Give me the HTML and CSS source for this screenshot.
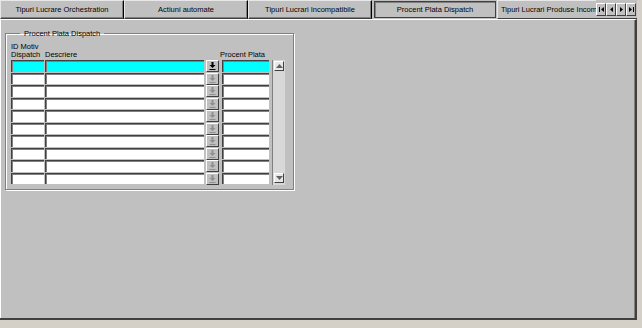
FILE: index.html
```html
<!DOCTYPE html>
<html lang="en">
<head>
    <meta charset="UTF-8">
    <title>Procent Plata Dispatch</title>
    <link rel="stylesheet" href="styles.css">
</head>
<body>
    <div class="window">
        <div class="tabs">
            <div class="tab">Tipuri Lucrare Orchestration</div>
            <div class="tab">Actiuni automate</div>
            <div class="tab">Tipuri Lucrari Incompatibile</div>
            <div class="tab tab-active">Procent Plata Dispatch</div>
            <div class="tab tab-cut">Tipuri Lucrari Produse Incompatibile</div>
            <div class="tab-nav">
                <span class="nav-btn"><svg width="7" height="7" viewBox="0 0 7 7"><rect x="1" y="1" width="1" height="5"/><path d="M6 1 L3 3.5 L6 6 Z"/></svg></span>
                <span class="nav-btn"><svg width="7" height="7" viewBox="0 0 7 7"><path d="M5 1 L2 3.5 L5 6 Z"/></svg></span>
                <span class="nav-btn"><svg width="7" height="7" viewBox="0 0 7 7"><path d="M2 1 L5 3.5 L2 6 Z"/></svg></span>
                <span class="nav-btn"><svg width="7" height="7" viewBox="0 0 7 7"><path d="M1 1 L4 3.5 L1 6 Z"/><rect x="5" y="1" width="1" height="5"/></svg></span>
            </div>
        </div>

        <div class="panel">
            <fieldset class="group">
                <legend>Procent Plata Dispatch</legend>
                <div class="grid" id="grid">
                    <div class="head head-id">ID Motiv<br>Dispatch</div>
                    <div class="head">Descriere</div>
                    <div class="head"></div>
                    <div class="head head-pct">Procent Plata</div>
                    <div class="head"></div>
                </div>
            </fieldset>
        </div>
    </div>

    <script>
        let grid = document.getElementById('grid');
        let rowCount = 10;

        for (let i = 0; i < rowCount; i++) {
            let current = i === 0 ? ' cell-current' : '';
            grid.insertAdjacentHTML('beforeend',
                '<div class="cell' + current + '"></div>' +
                '<div class="cell' + current + '"></div>' +
                '<div class="lov' + (i === 0 ? ' lov-active' : '') + '">' +
                    '<svg width="7" height="8" viewBox="0 0 7 8"><path d="M2.5 0 H4.5 V3 H6.5 L3.5 6 L0.5 3 H2.5 Z"/><rect x="0.5" y="7" width="6" height="1"/></svg>' +
                '</div>' +
                '<div class="cell' + current + '"></div>'
            );
            if (i === 0) {
                grid.insertAdjacentHTML('beforeend',
                    '<div class="scroll">' +
                        '<span class="scroll-btn"><svg width="7" height="4" viewBox="0 0 7 4"><path d="M3.5 0 L7 4 H0 Z"/></svg></span>' +
                        '<span class="scroll-btn"><svg width="7" height="4" viewBox="0 0 7 4"><path d="M0 0 H7 L3.5 4 Z"/></svg></span>' +
                    '</div>'
                );
            }
        }
    </script>
</body>
</html>
```

FILE: styles.css
```css
html, body {
    margin: 0;
    padding: 0;
}
body {
    width: 642px;
    height: 328px;
    background: #d4d0c8;
    font-family: "Liberation Sans", Arial, sans-serif;
    font-size: 7.5px;
    color: #000;
    overflow: hidden;
}
.window {
    width: 637px;
    height: 320px;
    display: flex;
    flex-direction: column;
    background: #c0c0c0;
    border-bottom: 2px solid #404040;
    box-sizing: border-box;
}
.tabs {
    display: flex;
    height: 19px;
    flex-shrink: 0;
}
.tab {
    width: 124px;
    box-sizing: border-box;
    border-top: 1px solid #e8e8e8;
    border-left: 1px solid #e8e8e8;
    border-right: 1px solid #000;
    border-bottom: 1px solid #404040;
    box-shadow: inset -1px -1px 0 #808080;
    display: flex;
    align-items: center;
    justify-content: center;
    white-space: nowrap;
    overflow: hidden;
}
.tab-active {
    margin: 1px 1px 1px 2px;
    width: 122px;
    border: 1px solid #404040;
    box-shadow: inset 1px 1px 0 #808080;
}
.tab-cut {
    width: 99px;
    justify-content: flex-start;
    padding-left: 3px;
    border-right: none;
    box-shadow: none;
}
.tab-nav {
    display: flex;
    padding-top: 3px;
    border-bottom: 1px solid #404040;
    box-sizing: border-box;
    width: 41px;
}
.nav-btn {
    width: 10px;
    height: 13px;
    box-sizing: border-box;
    border: 1px solid;
    border-color: #fff #404040 #404040 #fff;
    display: flex;
    align-items: center;
    justify-content: center;
}
.nav-btn svg {
    fill: #000;
}
.panel {
    flex: 1;
    border-top: 1px solid #fff;
    border-left: 1px solid #fff;
    border-right: 2px solid #404040;
    box-shadow: inset -1px 0 0 #808080;
    padding: 9px 0 0 4px;
}
.group {
    margin: 0;
    width: 289px;
    height: 161px;
    box-sizing: border-box;
    padding: 0 0 0 5px;
    border: 1px solid #808080;
    box-shadow: 1px 1px 0 #fff, inset 1px 1px 0 #fff;
}
.group legend {
    margin-left: 9px;
    padding: 0 4px;
    line-height: 9px;
    color: #000;
}
.grid {
    display: grid;
    grid-template-columns: 33px 159px 13px 50px 15px;
    grid-template-rows: 17px;
    grid-auto-rows: 12.5px;
    column-gap: 1px;
    margin-top: 5px;
}
.head {
    align-self: end;
    line-height: 8px;
    padding-bottom: 1px;
    white-space: nowrap;
}
.head-pct {
    margin-left: 1px;
}
.cell {
    background: #fff;
    border-top: 1px solid #404040;
    border-left: 1px solid #404040;
    box-shadow: inset 1px 1px 0 #808080;
    margin-bottom: 1px;
}
.cell-current {
    background: #00ffff;
}
.lov {
    margin: 0 0 0 1px;
    width: 13px;
    height: 12px;
    box-sizing: border-box;
    border: 1px solid;
    border-color: #fff #404040 #404040 #fff;
    display: flex;
    align-items: center;
    justify-content: center;
}
.lov svg {
    fill: #909090;
}
.lov-active svg {
    fill: #000;
}
.lov + .cell {
    margin-left: 3px;
}
.scroll {
    grid-column: 5;
    grid-row: 2 / span 10;
    margin-left: 2px;
    background: #d8d8d8;
    border-left: 1px solid #808080;
    display: flex;
    flex-direction: column;
    justify-content: space-between;
    padding: 1px 1px 2px 1px;
}
.scroll-btn {
    height: 10px;
    box-sizing: border-box;
    background: #e8e8e8;
    border: 1px solid;
    border-color: #fff #404040 #404040 #fff;
    display: flex;
    align-items: center;
    justify-content: center;
}
.scroll-btn svg {
    fill: #606060;
}
```
